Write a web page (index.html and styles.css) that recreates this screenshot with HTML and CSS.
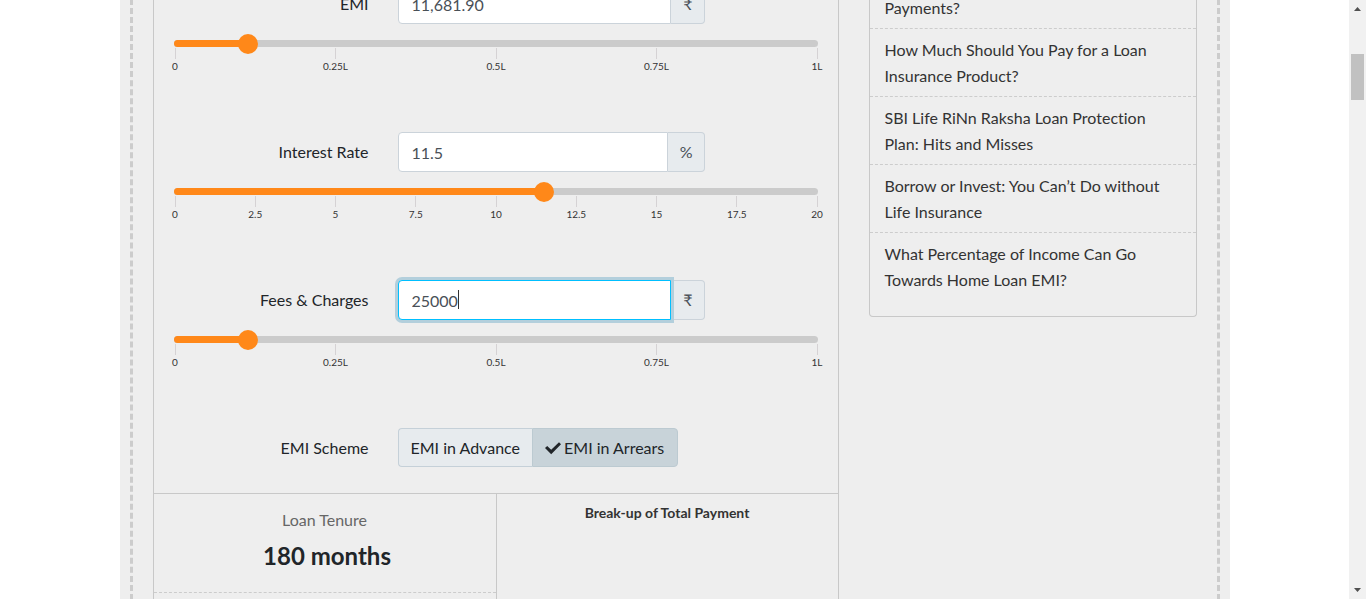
FILE: index.html
```html
<!DOCTYPE html>
<html lang="en">
<head>
<meta charset="utf-8">
<title>EMI Calculator</title>
<link rel="stylesheet" href="styles.css">
</head>
<body>
<div class="viewport">
  <div class="page">
    <div class="frame">
      <main class="calculator">
        <form class="form">
          <section class="field">
            <div class="form-row">
              <label class="field-label" for="emi">EMI</label>
              <div class="input-group">
                <input class="text-input" id="emi" type="text" value="11,681.90">
                <span class="addon">₹</span>
              </div>
            </div>
            <div class="slider">
              <div class="track"><div class="fill" style="width:11.6%"></div></div>
              <input class="range" type="range" min="0" max="100000" step="100" value="11600" aria-label="EMI slider">
            </div>
            <ul class="ticks"><li>0</li><li>0.25L</li><li>0.5L</li><li>0.75L</li><li>1L</li></ul>
          </section>
          <section class="field">
            <div class="form-row">
              <label class="field-label" for="rate">Interest Rate</label>
              <div class="input-group">
                <input class="text-input" id="rate" type="text" value="11.5">
                <span class="addon">%</span>
              </div>
            </div>
            <div class="slider">
              <div class="track"><div class="fill" style="width:57.5%"></div></div>
              <input class="range" type="range" min="0" max="20" step="0.25" value="11.5" aria-label="Interest rate slider">
            </div>
            <ul class="ticks"><li>0</li><li>2.5</li><li>5</li><li>7.5</li><li>10</li><li>12.5</li><li>15</li><li>17.5</li><li>20</li></ul>
          </section>
          <section class="field">
            <div class="form-row">
              <label class="field-label" for="fees">Fees &amp; Charges</label>
              <div class="input-group">
                <input class="text-input is-active" id="fees" type="text" value="25000">
                <span class="caret"></span>
                <span class="addon">₹</span>
              </div>
            </div>
            <div class="slider">
              <div class="track"><div class="fill" style="width:11.6%"></div></div>
              <input class="range" type="range" min="0" max="100000" step="100" value="11600" aria-label="Fees and charges slider">
            </div>
            <ul class="ticks"><li>0</li><li>0.25L</li><li>0.5L</li><li>0.75L</li><li>1L</li></ul>
          </section>
          <div class="form-row scheme">
            <span class="field-label" id="scheme-label">EMI Scheme</span>
            <div class="button-group" role="group" aria-labelledby="scheme-label">
              <button class="option" type="button">EMI in Advance</button>
              <button class="option is-selected" type="button" aria-pressed="true"><svg class="check" viewBox="0 0 16 16" aria-hidden="true"><path d="M14 2.2 16 4.3 6.2 14.3 0 8.1 2.2 5.9 6.2 9.8z"/></svg>EMI in Arrears</button>
            </div>
          </div>
        </form>
        <div class="results">
          <div class="summary">
            <div class="summary-item">
              <h4 class="summary-title">Loan Tenure</h4>
              <p class="summary-value">180 months</p>
            </div>
          </div>
          <div class="chart"><h5 class="chart-title">Break-up of Total Payment</h5></div>
        </div>
      </main>
      <aside class="articles">
        <ul class="article-list">
          <li><a href="#">Payments?</a></li>
          <li><a href="#">How Much Should You Pay for a Loan Insurance Product?</a></li>
          <li><a href="#">SBI Life RiNn Raksha Loan Protection Plan: Hits and Misses</a></li>
          <li><a href="#">Borrow or Invest: You Can’t Do without Life Insurance</a></li>
          <li><a href="#">What Percentage of Income Can Go Towards Home Loan EMI?</a></li>
        </ul>
      </aside>
    </div>
  </div>
  <div class="scrollbar" aria-hidden="true">
    <svg class="arrow" viewBox="0 0 17 17"><path d="M5 11h7L8.500 7z"/></svg>
    <div class="scroll-track"><div class="scroll-thumb"></div></div>
    <svg class="arrow" viewBox="0 0 17 17"><path d="M5 6h7l-3.500 4z"/></svg>
  </div>
</div>
</body>
</html>
```
FILE: styles.css
```css
* { box-sizing: border-box; }

body {
  margin: 0;
  background: #fff;
  color: #212529;
  font: 16px/24px Lato, "Open Sans", sans-serif;
  font-variant-ligatures: none;
}

ul { margin: 0; padding: 0; list-style: none; }

.viewport {
  display: grid;
  grid-template-columns: 1fr 17px;
  height: 100vh;
  overflow: hidden;
}

.page {
  width: 100%;
  max-width: 1110px;
  height: 100vh;
  margin: 0 auto;
  padding: 0 10px;
  background: #eee;
}

/* The view opens part-way down the page. */
.frame {
  display: grid;
  grid-template-columns: 686fr 328fr;
  gap: 30px;
  align-items: start;
  margin-top: -10px;
  padding: 0 20px 30px;
  border: dashed #ccc;
  border-width: 0 3px;
}

.calculator {
  margin-top: -6px;
  border: solid #c8c8c8;
  border-width: 0 1px;
}

.form { padding-bottom: 26px; }

.form-row {
  display: grid;
  grid-template-columns: 215fr 336fr 133fr;
  align-items: center;
}

.field-label { text-align: right; }

.input-group {
  position: relative;
  display: flex;
  height: 40px;
  margin-left: 29px;
}

.text-input {
  flex: 1;
  min-width: 0;
  padding: 1px 13px 0;
  border: 1px solid #cbd3da;
  border-radius: 4px 0 0 4px;
  background: #fff;
  color: #495057;
  font: inherit;
  outline: 0;
}

.text-input.is-active {
  position: relative;
  z-index: 1;
  border-color: #00bfff;
  box-shadow: 0 0 0 3px #b3cfdc;
}

.caret {
  position: absolute;
  z-index: 2;
  top: 10px;
  left: 60px;
  width: 1px;
  height: 19px;
  background: #333;
}

.addon {
  display: flex;
  align-items: center;
  padding: 0 11px 0 12px;
  border: 1px solid #cbd3da;
  border-left: 0;
  border-radius: 0 4px 4px 0;
  background: #e7ebee;
  color: #495057;
}

.slider {
  display: grid;
  align-items: center;
  height: 20px;
  margin: 10px 20px 0;
}

.track, .range { grid-area: 1 / 1; }

.track {
  height: 7px;
  margin-bottom: 1px;
  border-radius: 4px;
  background: #cbcbcb;
  overflow: hidden;
}

.fill { height: 100%; background: #ff8819; }

.range {
  width: calc(100% + 20px);
  height: 20px;
  margin: 0 -10px;
  background: transparent;
  appearance: none;
}

.range::-webkit-slider-thumb {
  width: 20px;
  height: 20px;
  border: 0;
  border-radius: 50%;
  background: #ff8819;
  appearance: none;
}

.ticks {
  display: flex;
  justify-content: space-between;
  height: 84px;
  margin: -6px 20px 0 21px;
  font-size: 10px;
  line-height: 14px;
  color: #333;
}

.ticks li {
  display: flex;
  flex-direction: column;
  align-items: center;
  width: 1px;
}

.ticks li::before {
  content: "";
  width: 1px;
  height: 11px;
  background: #d5d2d4;
}

.button-group { display: flex; margin-left: 29px; }

.option {
  display: flex;
  align-items: center;
  gap: 3px;
  height: 39px;
  padding: 0 12px;
  border: 1px solid #c5d0d8;
  border-right: 0;
  border-radius: 4px 0 0 4px;
  background: #e7ebee;
  color: #212529;
  font: inherit;
  white-space: nowrap;
}

.option.is-selected {
  padding-right: 13px;
  border: 1px solid #bccad1;
  border-radius: 0 4px 4px 0;
  background: #c8d3d9;
}

.check { width: 16px; height: 16px; fill: #212529; }

.results {
  display: grid;
  grid-template-columns: 1fr 1fr;
  border-top: 1px solid #c8c8c8;
}

.summary { padding-bottom: 40px; text-align: center; }

.summary-item {
  padding: 14px 0 20px;
  border-bottom: 1px dashed #ccc;
}

.summary-title {
  margin: 0;
  color: #666;
  font-size: 16px;
  font-weight: 400;
}

.summary-value {
  margin: 8px 0 0;
  padding-left: 5px;
  font-size: 24px;
  font-weight: 700;
  line-height: 32px;
}

.chart {
  border-left: 1px solid #c8c8c8;
  text-align: center;
}

.chart-title {
  margin: 7px 0 0;
  color: #333;
  font-size: 14px;
  font-weight: 700;
}

.articles {
  margin-top: -6px;
  padding: 3px 0 16px;
  border: 1px solid #c8c8c8;
  border-top: 0;
  border-radius: 0 0 4px 4px;
}

.article-list li {
  padding: 8px 15px 7px;
  border-bottom: 1px dashed #ccc;
  line-height: 26px;
}

.article-list li:last-child { border-bottom: 0; }

.article-list a { color: #333; text-decoration: none; }

.scrollbar {
  display: flex;
  flex-direction: column;
  background: #f1f1f1;
}

.arrow { width: 17px; height: 17px; fill: #505050; }

.scroll-track { flex: 1; padding: 37px 2px 0; }

.scroll-thumb { height: 46px; background: #c1c1c1; }
```
